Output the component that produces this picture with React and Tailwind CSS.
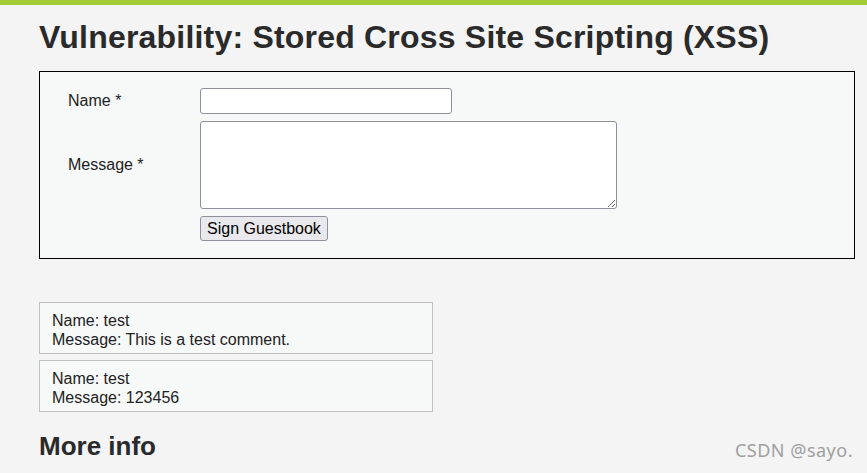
export default function App() {
  return (
    <div className="relative min-h-[473px] w-full overflow-hidden bg-[#f4f4f4] font-['Liberation_Sans',Arial,sans-serif] text-[#222]">
      <div className="h-[5px] bg-[#a3cb38]" />
      <div className="pl-[39px] pr-[12px]">
        <h1 className="mt-[12px] h-[40px] text-[32px] leading-[40px] font-bold tracking-[0.2px] text-[#2a2a2a]">
          Vulnerability: Stored Cross Site Scripting (XSS)
        </h1>

        <div className="mt-[14px] h-[188px] border border-black bg-[#f7f8f8]">
          <form className="pt-[16px] pl-[28px]" onSubmit={(e) => e.preventDefault()}>
            <div className="flex items-center">
              <label className="w-[132px] text-[16px]">Name *</label>
              <input
                type="text"
                className="h-[26px] w-[252px] rounded-[3px] border border-[#8f8f9d] bg-white"
              />
            </div>
            <div className="mt-[7px] flex items-center">
              <label className="w-[132px] text-[16px]">Message *</label>
              <textarea className="h-[88px] w-[417px] resize rounded-[3px] border border-[#8f8f9d] bg-white" />
            </div>
            <div className="mt-[7px] pl-[132px]">
              <button
                type="submit"
                className="h-[25px] rounded-[3px] border border-[#8f8f9d] bg-[#e9e9ed] px-[6px] text-[16px] leading-[20px] text-black"
              >
                Sign Guestbook
              </button>
            </div>
          </form>
        </div>

        <div className="mt-[43px] flex w-[394px] flex-col gap-[6px]">
          <div className="h-[52px] border border-[#c0c0c0] bg-[#f7f8f8] px-[12px] pt-[8px] text-[16px] leading-[19px]">
            <div>Name: test</div>
            <div>Message: This is a test comment.</div>
          </div>
          <div className="h-[52px] border border-[#c0c0c0] bg-[#f7f8f8] px-[12px] pt-[8px] text-[16px] leading-[19px]">
            <div>Name: test</div>
            <div>Message: 123456</div>
          </div>
        </div>

        <h2 className="mt-[18px] text-[26px] leading-[32px] font-bold text-[#2a2a2a]">More info</h2>
      </div>

      <div className="absolute right-[14px] bottom-[9px] font-['Noto_Sans',sans-serif] text-[18px] tracking-[0.5px] text-[#a0a0a0]">
        CSDN @sayo.
      </div>
    </div>
  );
}
